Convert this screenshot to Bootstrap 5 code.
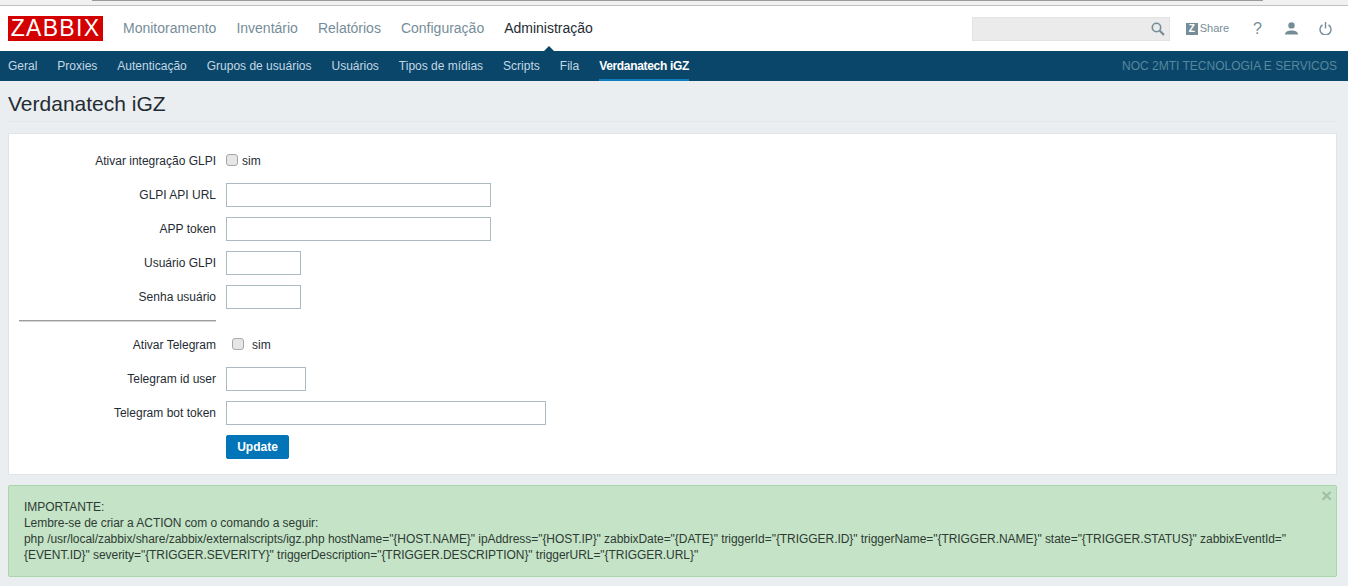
<!DOCTYPE html>
<html lang="pt-BR">
<head>
  <meta charset="UTF-8">
  <title>Verdanatech iGZ</title>
  <link href="https://cdn.jsdelivr.net/npm/bootstrap@5.3.0/dist/css/bootstrap.min.css" rel="stylesheet">
  <style>
    html, body { height: 586px; overflow: hidden; }
    body { background: #ebeef0; font-family: "Liberation Sans", Arial, sans-serif; font-size: 12px; color: #1f2c33; }
    .top-strip { height: 6px; background: #f1f1f1; border-bottom: 1px solid #c0c0c0; padding-left: 92px; padding-right: 85px; }
    .top-strip div { height: 1px; background: #9a9a9a; }
    .main-bar { height: 45px; background: #fff; padding: 0 16px 0 8px; }
    .zbx-logo { width: 95px; height: 25px; background: #d40000; color: #fff; font-size: 23px; line-height: 25px; letter-spacing: 1.3px; text-align: center; text-decoration: none; }
    .main-menu { margin-left: 20px; gap: 20px; }
    .main-menu a { font-size: 14px; color: #768d99; text-decoration: none; }
    .main-menu a.active { color: #1f2c33; position: relative; }
    .main-menu a.active::after { content: ""; position: absolute; left: 50%; bottom: -14px; margin-left: -7px; border: 7px solid transparent; border-top: 0; border-bottom-color: #0a466a; }
    .search-box { position: relative; width: 198px; height: 24px; margin-right: 16px; }
    .search-box input { width: 100%; height: 24px; padding: 0 24px 0 5px; background: #ebebeb; border: 1px solid #e3e3e3; border-radius: 0; }
    .search-box svg { position: absolute; right: 5px; top: 5px; }
    .share-link { color: #768d99; text-decoration: none; font-size: 11px; margin-right: 24px; }
    .zshare { display: inline-block; width: 12px; height: 12px; line-height: 12px; background: #768d99; color: #fff; font-size: 10px; font-weight: 700; text-align: center; margin-right: 2px; }
    .tool-icon { display: block; color: #768d99; text-decoration: none; }
    .help-icon { font-size: 16px; line-height: 16px; margin-right: 23px; }
    .user-icon { margin-right: 21px; }
    .sub-bar { height: 30px; background: #0a466a; padding: 0 11px 0 8px; }
    .sub-menu { gap: 20px; height: 30px; }
    .sub-menu a { display: block; height: 30px; line-height: 30px; color: #c4d8e4; text-decoration: none; }
    .sub-menu a.active { color: #fff; font-weight: 700; letter-spacing: -.33px; border-bottom: 2px solid #0f7fc0; }
    .server-name { color: #56889c; }
    .page-head { margin: 0 11px 0 8px; height: 41px; padding-top: 11px; border-bottom: 1px solid #e3e7ea; }
    .page-head h1 { font-size: 21px; line-height: 24px; margin: 0; font-weight: 400; color: #1f2c33; }
    .form-panel { margin: 11px 11px 0 8px; background: #fff; border: 1px solid #dfe4e7; border-radius: 0; padding: 14px 10px 15px; }
    .form-line { min-height: 24px; margin-bottom: 10px; }
    .form-line.check-line { margin-bottom: 11px; }
    .form-line.check-line label { padding-top: 2px; }
    .form-line label.side { width: 197px; margin-right: 10px; text-align: right; margin-bottom: 0; }
    .form-line .form-control { height: 24px; min-height: 24px; padding: 0 5px; border: 1px solid #acbbc2; border-radius: 0; font-size: 12px; }
    .w-long { width: 265px; }
    .w-short { width: 75px; }
    .w-mid { width: 80px; }
    .w-big { width: 320px; }
    .form-line .form-check-input { width: 12px; height: 12px; margin: 0 4px 0 0; background-color: #e6e6e6; border: 1px solid #a8a8a8; border-radius: 3px; }
    .indented { margin-left: 6px; }
    .indented .form-check-input { margin-right: 8px; }
    .rule-line { width: 197px; height: 2px; margin: 11px 0 10px; border: 0; border-top: 1px solid #9d9d9d; border-bottom: 1px solid #d5d5d5; opacity: 1; }
    .btn-update { width: 63px; height: 24px; padding: 0; margin-left: 207px; font-size: 12px; font-weight: 700; border-radius: 2px; background: #0275b8; border-color: #0275b8; }
    .note-box { position: relative; margin: 10px 11px 0 8px; height: 92px; padding: 13px 15px; background: #c5e3c6; border: 1px solid #a6d8a8; border-radius: 2px; color: #2d3b34; line-height: 16px; font-size: 12px; letter-spacing: -.05px; }
    .note-close { position: absolute; top: 0; right: 4px; color: #a3bdab; font-size: 19px; line-height: 19px; font-weight: 700; }
  </style>
</head>
<body>
  <div class="top-strip"><div></div></div>

  <div class="main-bar d-flex align-items-center">
    <a class="zbx-logo" href="#">ZABBIX</a>
    <nav class="main-menu d-flex">
      <a href="#">Monitoramento</a>
      <a href="#">Inventário</a>
      <a href="#">Relatórios</a>
      <a href="#">Configuração</a>
      <a href="#" class="active">Administração</a>
    </nav>
    <div class="ms-auto d-flex align-items-center">
      <div class="search-box">
        <input type="text" aria-label="Buscar">
        <svg width="14" height="14" viewBox="0 0 14 14" fill="none" stroke="#768d99"><circle cx="5.5" cy="5.5" r="4.2" stroke-width="1.6"/><path d="M8.8 8.8 13 13" stroke-width="2.2"/></svg>
      </div>
      <a class="share-link" href="#"><span class="zshare">Z</span>Share</a>
      <a class="tool-icon help-icon" href="#">?</a>
      <a class="tool-icon user-icon" href="#">
        <svg class="d-block" width="13" height="13" viewBox="0 0 13 13" fill="#768d99"><circle cx="6.5" cy="3.400" r="3.200"/><path d="M0 12.500c0-2.800 2.800-4 6.500-4s6.500 1.200 6.500 4z"/></svg>
      </a>
      <a class="tool-icon" href="#">
        <svg class="d-block" width="13" height="13" viewBox="0 0 13 13" fill="none" stroke="#768d99" stroke-width="1.4"><path d="M3.500 2.800a5.500 5.500 0 1 0 6 0"/><path d="M6.500 0v6.500"/></svg>
      </a>
    </div>
  </div>

  <div class="sub-bar d-flex justify-content-between align-items-center">
    <nav class="sub-menu d-flex">
      <a href="#">Geral</a>
      <a href="#">Proxies</a>
      <a href="#">Autenticação</a>
      <a href="#">Grupos de usuários</a>
      <a href="#">Usuários</a>
      <a href="#">Tipos de mídias</a>
      <a href="#">Scripts</a>
      <a href="#">Fila</a>
      <a href="#" class="active">Verdanatech iGZ</a>
    </nav>
    <span class="server-name">NOC 2MTI TECNOLOGIA E SERVICOS</span>
  </div>

  <div class="page-head"><h1>Verdanatech iGZ</h1></div>

  <form class="form-panel">
    <div class="form-line check-line d-flex align-items-center">
      <label class="side">Ativar integração GLPI</label>
      <input class="form-check-input" type="checkbox" id="glpiOn">
      <label for="glpiOn">sim</label>
    </div>
    <div class="form-line d-flex align-items-center">
      <label class="side">GLPI API URL</label>
      <input type="text" class="form-control w-long">
    </div>
    <div class="form-line d-flex align-items-center">
      <label class="side">APP token</label>
      <input type="text" class="form-control w-long">
    </div>
    <div class="form-line d-flex align-items-center">
      <label class="side">Usuário GLPI</label>
      <input type="text" class="form-control w-short">
    </div>
    <div class="form-line d-flex align-items-center">
      <label class="side">Senha usuário</label>
      <input type="password" class="form-control w-short">
    </div>
    <hr class="rule-line">
    <div class="form-line check-line d-flex align-items-center">
      <label class="side">Ativar Telegram</label>
      <span class="indented d-flex align-items-center">
        <input class="form-check-input" type="checkbox" id="tgOn">
        <label for="tgOn">sim</label>
      </span>
    </div>
    <div class="form-line d-flex align-items-center">
      <label class="side">Telegram id user</label>
      <input type="text" class="form-control w-mid">
    </div>
    <div class="form-line d-flex align-items-center">
      <label class="side">Telegram bot token</label>
      <input type="text" class="form-control w-big">
    </div>
    <button type="button" class="btn btn-primary btn-update d-block">Update</button>
  </form>

  <div class="note-box">
    <span class="note-close">×</span>
    IMPORTANTE:<br>
    Lembre-se de criar a ACTION com o comando a seguir:<br>
    php /usr/local/zabbix/share/zabbix/externalscripts/igz.php hostName="{HOST.NAME}" ipAddress="{HOST.IP}" zabbixDate="{DATE}" triggerId="{TRIGGER.ID}" triggerName="{TRIGGER.NAME}" state="{TRIGGER.STATUS}" zabbixEventId="{EVENT.ID}" severity="{TRIGGER.SEVERITY}" triggerDescription="{TRIGGER.DESCRIPTION}" triggerURL="{TRIGGER.URL}"
  </div>

  <script src="https://cdn.jsdelivr.net/npm/bootstrap@5.3.0/dist/js/bootstrap.bundle.min.js"></script>
</body>
</html>
